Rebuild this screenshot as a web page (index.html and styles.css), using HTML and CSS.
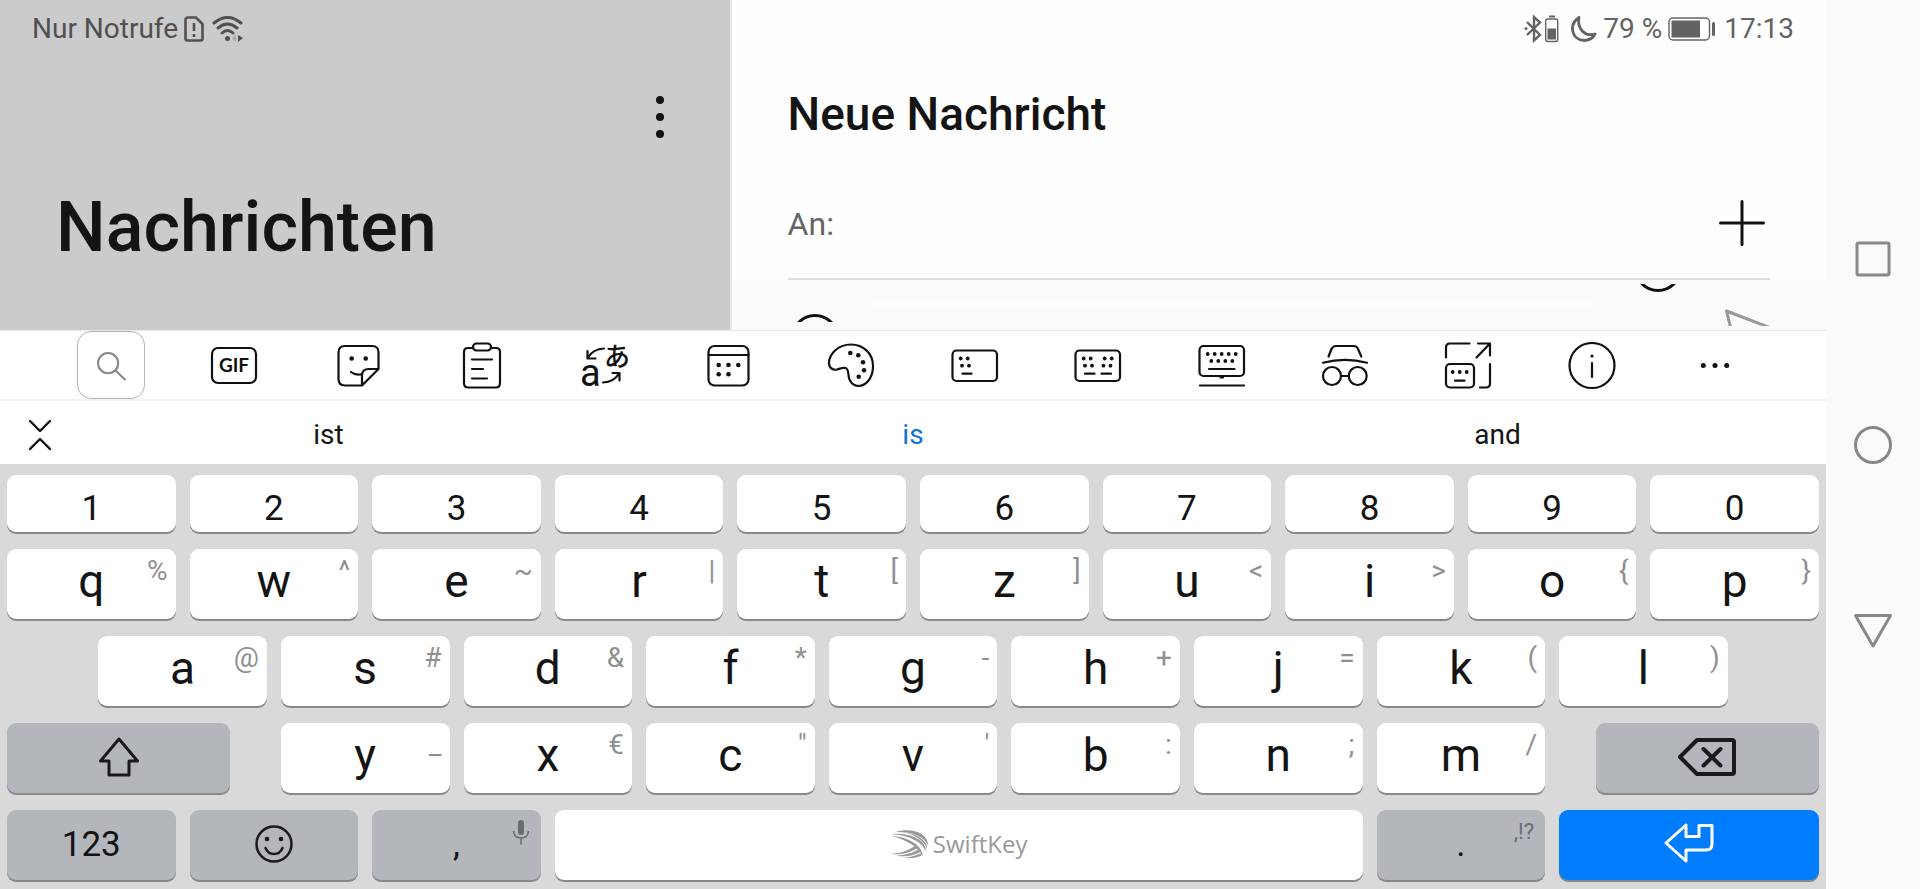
FILE: index.html
```
<!DOCTYPE html>
<html lang="de">
<head>
    <meta charset="UTF-8">
    <meta name="viewport" content="width=device-width, initial-scale=1.0">
    <title>Neue Nachricht</title>
    <link rel="stylesheet" href="styles.css">
</head>
<body>

<div class="screen">
    <main class="app">
        <div class="panes">
            <!-- Conversation list -->
            <section class="pane pane-list">
                <div class="status">
                    <span>Nur Notrufe</span>
                    <svg class="sim-icon" width="20" height="26" viewBox="0 0 20 26" fill="none" stroke="currentColor" stroke-width="2.600"><path d="M4 1.5H12L18.5 8V22.500Q18.500 24.500 16.500 24.500H3.500Q1.500 24.500 1.500 22.500V4Q1.500 1.500 4 1.500Z"/><path d="M10 7V15M10 18V21"/></svg>
                    <svg class="wifi-icon" width="32" height="26" viewBox="0 0 32 26" fill="none" stroke="currentColor" stroke-width="3" stroke-linecap="round"><path d="M2 7Q15.500 -4 29 7M6 12Q15.500 4 25 12M10 17Q15.500 12 21 17"/><circle cx="15.500" cy="22.500" r="2.500" fill="currentColor" stroke="none"/><path d="M24 19V26L20 22.500Z" fill="#aaa" stroke="none"/><path d="M26 19V26L31 22Z" fill="currentColor" stroke="none"/></svg>
                </div>
                <div class="list-menu">
                    <button class="plain" aria-label="Mehr">
                        <svg width="20" height="48" viewBox="0 0 20 48" fill="#111"><circle cx="10" cy="7" r="4"/><circle cx="10" cy="24" r="4"/><circle cx="10" cy="41" r="4"/></svg>
                    </button>
                </div>
                <h1>Nachrichten</h1>
            </section>

            <!-- New message -->
            <section class="pane pane-message">
                <div class="status status-right">
                    <svg width="35" height="28" viewBox="0 0 35 28" fill="none" stroke="currentColor" stroke-width="2.400"><path d="M3 7L16 20L10 25.500V2L16 7.500L3 20"/><circle cx="2" cy="13.500" r="1.500" fill="currentColor" stroke="none"/><rect x="21.700" y="4" width="12" height="22.500" rx="2" stroke-width="1.400"/><path d="M25 1.500H31" stroke-width="2"/><rect x="23.500" y="13.500" width="8.500" height="11" fill="currentColor" stroke="none"/></svg>
                    <svg class="moon-icon" width="26" height="28" viewBox="0 0 26 28" fill="none" stroke="currentColor" stroke-width="2.800" stroke-linejoin="round"><path d="M8 2.500C-3 10 1 25 13 25.500C18 25.500 22 23 24 19C14 22 6 14 8 2.500Z"/></svg>
                    <span>79 %</span>
                    <svg class="battery-icon" width="48" height="24" viewBox="0 0 48 24"><rect x="1" y="1" width="40.500" height="22" rx="4" fill="none" stroke="currentColor" stroke-width="1.400"/><rect x="3.500" y="3.500" width="28.500" height="17" fill="currentColor"/><rect x="44" y="5" width="3" height="14" rx="1.500" fill="currentColor"/></svg>
                    <time>17:13</time>
                </div>
                <h2>Neue Nachricht</h2>
                <div class="recipient">
                    <label for="recipient">An:</label>
                    <input type="text" id="recipient">
                    <button class="plain" aria-label="Empfänger hinzufügen">
                        <svg width="48" height="48" viewBox="0 0 48 48" stroke="#111" stroke-width="3" stroke-linecap="round"><path d="M2.500 24H45.500M24 2.500V45.500"/></svg>
                    </button>
                </div>
                <!-- Top edge of the compose row, the keyboard hides the rest -->
                <div class="compose">
                    <svg class="attach-icon" width="36" height="8" viewBox="0 0 36 8" fill="none" stroke="#111" stroke-width="3"><circle cx="18" cy="24" r="22.500"/></svg>
                    <span class="compose-field"></span>
                    <svg class="emoji-icon" width="36" height="8" viewBox="0 0 36 8" fill="none" stroke="#111" stroke-width="3"><circle cx="18" cy="-16" r="22.500"/></svg>
                    <svg class="send-icon" width="46" height="17" viewBox="0 0 46 17" fill="none" stroke="#999" stroke-width="3" stroke-linejoin="round"><path d="M48 19.500L2.500 2L8 24"/></svg>
                </div>
            </section>
        </div>

        <div class="toolbar">
            <button class="plain search" aria-label="Suche"><svg viewBox="0 0 48 48"><circle cx="21" cy="21" r="10.500"/><path d="M29 29L38.500 38"/></svg></button>
            <button class="plain" aria-label="GIF"><svg viewBox="0 0 48 48"><rect x="2" y="6" width="44" height="35" rx="6"/><text class="gif" x="24" y="30" text-anchor="middle">GIF</text></svg></button>
            <button class="plain" aria-label="Sticker"><svg viewBox="0 0 48 48"><path d="M28 43.500H11Q4.500 43.500 4.500 37V10.500Q4.500 4 11 4H38Q44.500 4 44.500 10.500V27L28 43.500V33Q28.500 27 34.500 27H44.500M17 30Q22 34 28 32"/><g class="dots"><circle cx="17.700" cy="16.500" r="2.300"/><circle cx="31.700" cy="16.500" r="2.300"/></g></svg></button>
            <button class="plain" aria-label="Zwischenablage"><svg viewBox="0 0 48 48"><path d="M16 6H11Q7 6 7 10V41Q7 45.500 11 45.500H39Q43 45.500 43 41V10Q43 6 39 6H34M15 17.500H35M15 27H26M15 36.500H30"/><rect x="16" y="1.500" width="18" height="7" rx="3.500"/></svg></button>
            <button class="plain" aria-label="Übersetzen"><svg viewBox="0 0 48 48"><text class="latin" x="0" y="44">a</text><text class="kana" x="24" y="24">あ</text><path d="M24 6.500Q13 7 8 15.500M7.500 9V16.500H15.500M23 40.500Q34 40 39 31.500M32.500 31H39.500V38.500"/></svg></button>
            <button class="plain" aria-label="Kalender"><svg viewBox="0 0 48 48"><rect x="4.500" y="4" width="40" height="39.500" rx="6"/><path d="M4.500 13H44.500"/><g class="dots"><circle cx="14.700" cy="23" r="2.300"/><circle cx="24.500" cy="23" r="2.300"/><circle cx="34.300" cy="23" r="2.300"/><circle cx="14.700" cy="32.300" r="2.300"/><circle cx="24.500" cy="32.300" r="2.300"/></g></svg></button>
            <button class="plain" aria-label="Designs"><svg viewBox="0 0 48 48"><path d="M24 2.500C10 2.500 2 13 2 21C2 26 6 28.500 10 27.500C14 26.500 17 24.500 19.500 26.500C22.500 29 20.500 33 22.500 37.500C24.500 42 28 44 32 44C41 43 46 34 46 24C46 11 36 2.500 24 2.500Z"/><g class="dots"><circle cx="23.300" cy="11" r="2.300"/><circle cx="31.300" cy="13.300" r="2.300"/><circle cx="36" cy="20.300" r="2.300"/><circle cx="37" cy="28.300" r="2.300"/><circle cx="31.700" cy="34.700" r="2.300"/></g></svg></button>
            <button class="plain" aria-label="Einhandmodus"><svg viewBox="0 0 48 48"><rect x="1.500" y="8.500" width="44.500" height="30.500" rx="4"/><path d="M11.500 31.700H20.500"/><g class="dots"><circle cx="9.700" cy="16.500" r="1.900"/><circle cx="16.700" cy="16.500" r="1.900"/><circle cx="11" cy="23.700" r="1.900"/><circle cx="18" cy="23.700" r="1.900"/></g></svg></button>
            <button class="plain" aria-label="Geteilte Tastatur"><svg viewBox="0 0 48 48"><rect x="1.500" y="8.500" width="44.500" height="30.500" rx="4"/><path d="M11 31.700H20.500M27.500 31.700H37"/><g class="dots"><circle cx="9.700" cy="16.500" r="1.900"/><circle cx="16.700" cy="16.500" r="1.900"/><circle cx="30.700" cy="16.500" r="1.900"/><circle cx="37.700" cy="16.500" r="1.900"/><circle cx="11" cy="23.700" r="1.900"/><circle cx="18" cy="23.700" r="1.900"/><circle cx="29.500" cy="23.700" r="1.900"/><circle cx="36.500" cy="23.700" r="1.900"/></g></svg></button>
            <button class="plain" aria-label="Schwebende Tastatur"><svg viewBox="0 0 48 48"><rect x="1.500" y="4" width="44.500" height="30" rx="4"/><path d="M11 27H36.500M2 43.500H46M22.500 35.500H25"/><g class="dots"><circle cx="9.700" cy="12" r="1.900"/><circle cx="16.700" cy="12" r="1.900"/><circle cx="23.700" cy="12" r="1.900"/><circle cx="30.700" cy="12" r="1.900"/><circle cx="37.700" cy="12" r="1.900"/><circle cx="13.300" cy="19" r="1.900"/><circle cx="20.300" cy="19" r="1.900"/><circle cx="27.300" cy="19" r="1.900"/><circle cx="34.300" cy="19" r="1.900"/></g></svg></button>
            <button class="plain" aria-label="Inkognito"><svg viewBox="0 0 48 48"><circle cx="11" cy="34" r="9"/><circle cx="36.700" cy="34" r="9"/><path d="M20 34H27.500M2 20.700Q24 15 46 20.700M7.500 14.500L10.500 7Q12 4 15 4H32.500Q36 4 37 7L40.300 14.500"/></svg></button>
            <button class="plain" aria-label="Größe ändern"><svg viewBox="0 0 48 48"><rect x="2" y="22" width="28" height="23.500" rx="4"/><path d="M2 15.500V5.500Q2 1.500 6 1.500H25.500M32.500 15.500L46 1.500M34 1.500H46V13.500M46 22V41.500Q46 45.500 42 45.500H36M11 38.700H20.500"/><g class="dots"><circle cx="8.700" cy="30" r="1.900"/><circle cx="15.700" cy="30" r="1.900"/><circle cx="22.700" cy="30" r="1.900"/></g></svg></button>
            <button class="plain" aria-label="Info"><svg viewBox="0 0 48 48"><circle cx="24" cy="23.500" r="22.500"/><path d="M24 21V35"/><g class="dots"><circle cx="24" cy="14" r="1.600"/></g></svg></button>
            <button class="plain" aria-label="Weitere"><svg viewBox="0 0 48 48"><g class="dots"><circle cx="12.300" cy="23.500" r="2.500"/><circle cx="24" cy="23.500" r="2.500"/><circle cx="35.700" cy="23.500" r="2.500"/></g></svg></button>
        </div>

        <div class="suggestions">
            <button class="plain collapse" aria-label="Leiste einklappen">
                <svg width="24" height="32" viewBox="0 0 24 32" fill="none" stroke="#111" stroke-width="2.400" stroke-linecap="round" stroke-linejoin="round"><path d="M2 2L12 12L22 2M2 30L12 20L22 30"/></svg>
            </button>
            <button class="plain word">ist</button>
            <button class="plain word word-main">is</button>
            <button class="plain word">and</button>
        </div>

        <div class="keyboard">
            <div class="row numbers">
                <button class="key">1</button>
                <button class="key">2</button>
                <button class="key">3</button>
                <button class="key">4</button>
                <button class="key">5</button>
                <button class="key">6</button>
                <button class="key">7</button>
                <button class="key">8</button>
                <button class="key">9</button>
                <button class="key">0</button>
            </div>
            <div class="row letters">
                <button class="key">q<span class="hint">%</span></button>
                <button class="key">w<span class="hint">^</span></button>
                <button class="key">e<span class="hint">~</span></button>
                <button class="key">r<span class="hint">|</span></button>
                <button class="key">t<span class="hint">[</span></button>
                <button class="key">z<span class="hint">]</span></button>
                <button class="key">u<span class="hint">&lt;</span></button>
                <button class="key">i<span class="hint">&gt;</span></button>
                <button class="key">o<span class="hint">{</span></button>
                <button class="key">p<span class="hint">}</span></button>
            </div>
            <div class="row letters">
                <button class="key key-a">a<span class="hint">@</span></button>
                <button class="key">s<span class="hint">#</span></button>
                <button class="key">d<span class="hint">&amp;</span></button>
                <button class="key">f<span class="hint">*</span></button>
                <button class="key">g<span class="hint">-</span></button>
                <button class="key">h<span class="hint">+</span></button>
                <button class="key">j<span class="hint">=</span></button>
                <button class="key">k<span class="hint">(</span></button>
                <button class="key">l<span class="hint">)</span></button>
            </div>
            <div class="row letters">
                <button class="key dark shift" aria-label="Umschalt">
                    <svg width="42" height="40" viewBox="0 0 42 40" fill="none" stroke="#1a1a1a" stroke-width="3" stroke-linejoin="round"><path d="M21 2L39.500 24H31V38H11V24H2.500Z"/></svg>
                </button>
                <button class="key key-y">y<span class="hint">_</span></button>
                <button class="key">x<span class="hint">€</span></button>
                <button class="key">c<span class="hint">"</span></button>
                <button class="key">v<span class="hint">'</span></button>
                <button class="key">b<span class="hint">:</span></button>
                <button class="key">n<span class="hint">;</span></button>
                <button class="key">m<span class="hint">/</span></button>
                <button class="key dark backspace" aria-label="Löschen">
                    <svg width="60" height="40" viewBox="0 0 60 40" fill="none" stroke="#1a1a1a" stroke-width="4" stroke-linecap="round" stroke-linejoin="round"><path d="M20 3H55Q57 3 57 5V35Q57 37 55 37H20L3 20ZM26.500 12L43.500 28.500M43.500 12L26.500 28.500"/></svg>
                </button>
            </div>
            <div class="row controls">
                <button class="key dark">123</button>
                <button class="key dark" aria-label="Emoji">
                    <svg width="38" height="38" viewBox="0 0 38 38" fill="none" stroke="#1a1a1a" stroke-width="2.500" stroke-linecap="round"><circle cx="19" cy="19" r="17.500"/><path d="M10.500 23Q13 29 19 29Q25 29 27.500 23"/><circle cx="12" cy="14" r="2.300" fill="#1a1a1a" stroke="none"/><circle cx="26" cy="14" r="2.300" fill="#1a1a1a" stroke="none"/></svg>
                </button>
                <button class="key dark">,
                    <svg class="mic" width="18" height="26" viewBox="0 0 18 26" fill="none" stroke="#6a6d70" stroke-width="1.600"><rect x="6" y="1" width="6" height="15" rx="3" fill="#6a6d70" stroke="none"/><path d="M1.500 12Q2 19 9 19Q16 19 16.500 12M9 19V25.500"/></svg>
                </button>
                <button class="key space">
                    <svg width="39" height="28" viewBox="0 0 115 84" fill="#999"><path d="M15 6C60 -8 112 4 114 48C100 16 62 5 15 6Z"/><path d="M3 12C60 8 106 28 107 64C94 36 58 16 3 12Z"/><path d="M6 18C55 22 94 44 98 78C82 50 52 32 6 18Z"/><path d="M50 10C84 12 110 34 111 56C98 32 80 18 50 10Z"/><path d="M2 71C32 70 58 60 74 47L82 54C60 68 30 76 2 71Z"/><path d="M18 77C45 76 70 68 84 58L91 65C70 77 45 82 18 77Z"/><path d="M42 83C63 81 80 76 92 69L95 76C82 84 64 86 42 83Z"/></svg>
                    <span>SwiftKey</span>
                </button>
                <button class="key dark">.<span class="hint hint-small">,!?</span></button>
                <button class="key enter" aria-label="Eingabe">
                    <svg width="50" height="40" viewBox="0 0 50 40" fill="none" stroke="#fff" stroke-width="3" stroke-linejoin="round"><path d="M2 20L22 2V13.500H35V2.500H48V21Q48 27 42 27H22V38Z"/></svg>
                </button>
            </div>
        </div>
    </main>

    <nav class="system-nav">
        <button class="plain" aria-label="Letzte Apps"><svg width="40" height="40" viewBox="0 0 40 40"><rect x="4" y="4" width="32" height="32" rx="1.500"/></svg></button>
        <button class="plain" aria-label="Startbildschirm"><svg width="40" height="40" viewBox="0 0 40 40"><circle cx="20" cy="20" r="17.500"/></svg></button>
        <button class="plain" aria-label="Zurück"><svg width="40" height="40" viewBox="0 0 40 40"><path d="M2.500 4.500H37.500L20 35Z"/></svg></button>
    </nav>
</div>

</body>
</html>
```
FILE: styles.css
```
* {
    box-sizing: border-box;
}
body {
    margin: 0;
    font-family: Roboto, "Noto Sans", sans-serif;
    color: #141414;
    background-color: #fafafa;
}
button {
    font-family: inherit;
    color: inherit;
    border: none;
    padding: 0;
    cursor: pointer;
}
svg {
    display: block;
    flex: none;
}
.plain {
    background: none;
}
.screen {
    display: flex;
    min-height: 100vh;
}
.app {
    flex: 1;
    min-width: 0;
    display: flex;
    flex-direction: column;
}

/* Upper part with the two panes */
.panes {
    display: flex;
    border-bottom: 1px solid #e8e8e8;
}
.pane {
    display: flex;
    flex-direction: column;
    min-width: 0;
}
.pane-list {
    flex: 2 0 0;
    background-color: #cbcbcb;
}
.pane-message {
    flex: 3 0 0;
    background-color: #fefefe;
    border-left: 2px solid #e8e8e8;
}
.status {
    display: flex;
    align-items: center;
    height: 58px;
    padding: 0 32px;
    font-size: 28px;
    line-height: 32px;
    color: #505050;
}
.sim-icon {
    margin: 0 8px 0 6px;
}
.status-right {
    justify-content: flex-end;
    color: #636363;
}
.moon-icon {
    margin: 0 6px 0 12px;
}
.battery-icon {
    margin: 0 8px 0 6px;
}
.list-menu {
    display: flex;
    justify-content: flex-end;
    padding: 35px 60px 0 0;
}
h1,
h2 {
    margin: 0;
    font-weight: 500;
}
h1 {
    padding-left: 56px;
    margin-top: 44px;
    font-size: 70px;
    line-height: 84px;
}
h2 {
    padding: 28px 56px 0;
    font-size: 46px;
    line-height: 56px;
}
.recipient {
    display: flex;
    align-items: center;
    height: 112px;
    margin: 26px 56px 0;
    border-bottom: 2px solid #dcdcdc;
    font-size: 32px;
    color: #666;
}
.recipient label {
    padding-top: 2px;
}
.recipient input {
    flex: 1;
    min-width: 0;
    border: none;
    outline: none;
    background: none;
    font: inherit;
}
.recipient button {
    margin-right: 4px;
}
.compose {
    display: flex;
    align-items: flex-start;
    height: 50px;
    padding: 0 56px;
    background-color: #fafafa;
}
.attach-icon {
    margin: 34px 38px 0 9px;
}
.compose-field {
    flex: 1;
    height: 5px;
    margin-top: 22px;
    background-color: #fff;
}
.emoji-icon {
    margin: 4px 48px 0;
}
.send-icon {
    margin-top: 29px;
}

/* Keyboard tools */
.toolbar {
    display: flex;
    padding: 0 49px;
    background-color: #fff;
    border-bottom: 2px solid #f1f1f1;
}
.toolbar button {
    flex: 1;
    display: flex;
    justify-content: center;
}
.toolbar svg {
    width: 68px;
    height: 68px;
    padding: 11px 10px 9px;
    fill: none;
    stroke: #111;
    stroke-width: 2.2;
    stroke-linecap: round;
    stroke-linejoin: round;
}
.toolbar .search svg {
    border: 1px solid #b4b4b4;
    border-radius: 14px;
    stroke: #888;
}
.toolbar .dots,
.toolbar text {
    fill: #111;
    stroke: none;
}
.toolbar .gif {
    font-family: Lato, sans-serif;
    font-size: 19px;
    font-weight: 700;
}
.toolbar .latin {
    font-size: 38px;
    font-weight: 400;
}
.toolbar .kana {
    font-family: "Noto Sans CJK JP", sans-serif;
    font-size: 26px;
    font-weight: 500;
}

.suggestions {
    display: flex;
    height: 63px;
    padding-right: 78px;
    background-color: #fff;
}
.collapse {
    width: 78px;
    display: flex;
    align-items: center;
    justify-content: center;
    padding: 4px 0 0 1px;
}
.word {
    flex: 3 0 0;
    padding-top: 4px;
    font-size: 28px;
}
.word-main {
    flex-grow: 4;
    color: #1273d1;
}

/* Keys, one regular key is 10 of 100 columns */
.keyboard {
    flex: 1;
    display: flex;
    flex-direction: column;
    gap: 17px;
    padding: 11px 0 9px;
    background-color: #d9d9d9;
}
.row {
    display: grid;
    grid-template-columns: repeat(100, minmax(0, 1fr));
    height: 70px;
}
.numbers {
    height: 57px;
}
.key {
    position: relative;
    grid-column-end: span 10;
    display: flex;
    align-items: center;
    justify-content: center;
    margin: 0 7px;
    background-color: #fff;
    border-radius: 9px;
    box-shadow: 0 2px 0 #87898b;
    font-size: 35px;
}
.numbers .key {
    padding-top: 9px;
}
.letters .key {
    padding-bottom: 6px;
    font-size: 46px;
}
.letters .dark,
.controls .dark {
    padding-bottom: 2px;
}
.key.dark {
    background-color: #b3b7bc;
}
.key-a {
    grid-column: 6 / span 10;
}
.key-y {
    grid-column: 16 / span 10;
}
.shift {
    grid-column: 1 / span 13;
}
.backspace {
    grid-column: 88 / span 13;
}
.space {
    grid-column-end: span 45;
    gap: 4px;
    padding-bottom: 3px;
    font-family: "Open Sans", sans-serif;
    font-size: 24px;
    color: #999;
}
.key.enter {
    grid-column-end: span 15;
    padding-bottom: 4px;
    background-color: #007dff;
}
.hint {
    position: absolute;
    top: 8px;
    right: 8px;
    font-size: 28px;
    line-height: 28px;
    font-weight: 400;
    color: #909090;
}
.hint-small {
    right: 11px;
    font-size: 22px;
    color: #6a6d70;
}
.mic {
    position: absolute;
    top: 9px;
    right: 11px;
}

/* System navigation on the right edge */
.system-nav {
    width: 94px;
    display: flex;
    flex-direction: column;
    align-items: center;
    justify-content: center;
    gap: 146px;
    background-color: #fafafa;
}
.system-nav svg {
    fill: none;
    stroke: #888;
    stroke-width: 3;
    stroke-linejoin: round;
}
```
